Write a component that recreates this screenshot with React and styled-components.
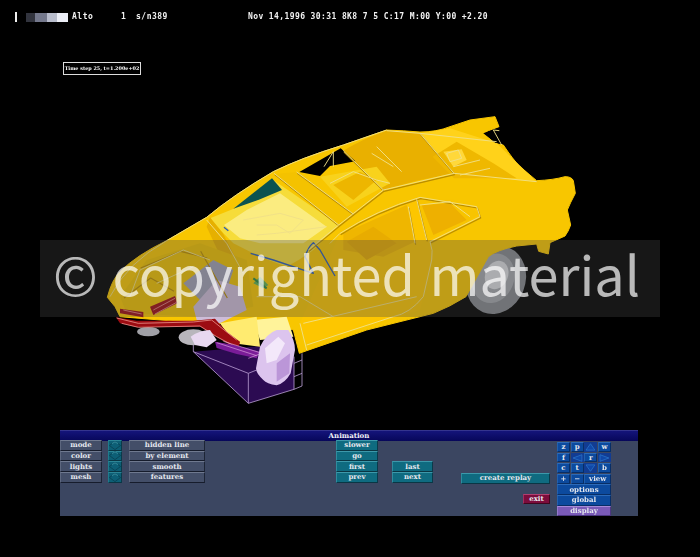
import React from "react";
import styled, { createGlobalStyle, css } from "styled-components";

const Global = createGlobalStyle`
  html, body { margin: 0; padding: 0; background: #000; }
  #root { width: 700px; height: 557px; overflow: hidden; }
`;

const Page = styled.div`
  position: relative;
  width: 700px;
  height: 557px;
  background: #000;
  display: flex;
  flex-direction: column;
  overflow: hidden;
`;

const StatusBar = styled.header`
  height: 12px;
  margin-top: 11px;
  padding-left: 15px;
  display: flex;
  align-items: center;
  color: #f2f2f2;
  font: bold 8px/10px "DejaVu Sans Mono", monospace;
  filter: blur(0.3px);
  white-space: pre;
`;
const Tick = styled.i`
  width: 1.5px;
  height: 10px;
  background: #eee;
  margin-right: 9.5px;
`;
const Ramp = styled.div`
  display: flex;
  height: 9px;
  margin-right: 4px;
`;
const RampStep = styled.span`
  width: ${p => p.$w}px;
  background: ${p => p.$c};
`;
const StatusText = styled.span`
  width: ${p => p.$w}px;
  letter-spacing: ${p => p.$ls || 0.5}px;
`;

const TimeLabel = styled.div`
  box-sizing: border-box;
  width: 78px;
  height: 13px;
  margin: 39px 0 0 63px;
  border: 1px solid #ddd;
  color: #fff;
  font: bold 4.9px/11px "DejaVu Serif", serif;
  text-align: center;
  white-space: nowrap;
  filter: blur(0.25px);
`;

const CarArt = styled.svg`
  display: block;
  width: 480px;
  height: 300px;
  margin: 35px 0 0 100px;
  flex: none;
  filter: blur(0.45px);
`;

const Watermark = styled.div`
  position: absolute;
  left: 40px;
  top: 240px;
  box-sizing: border-box;
  width: 620px;
  height: 77px;
  padding-left: 13px;
  background: rgba(73, 73, 73, 0.32);
  color: rgba(255, 255, 255, 0.7);
  font: 400 54px/66px "Noto Sans CJK JP", "Noto Sans", sans-serif;
  word-spacing: 2.5px;
  white-space: nowrap;
`;

const Panel = styled.section`
  box-sizing: border-box;
  width: 578px;
  height: 86px;
  margin: 20px 0 0 60px;
  background: #3b4661;
  display: flex;
  flex-direction: column;
  filter: blur(0.3px);
`;
const TitleBar = styled.div`
  height: 11px;
  flex: none;
  background: linear-gradient(#14147a, #07075a);
  border-top: 1px solid #34348e;
  box-sizing: border-box;
  color: #f0f0f6;
  font: bold 7px/10px "DejaVu Serif", serif;
  text-align: center;
`;
const PanelBody = styled.div`
  flex: 1;
  display: flex;
  align-items: flex-start;
  margin-top: -1px;
`;
const Col = styled.div`
  display: flex;
  flex-direction: column;
  flex: none;
  width: ${p => p.$w}px;
  margin-left: ${p => p.$ml || 0}px;
  padding-top: ${p => p.$pt || 0}px;
`;

const tones = {
  slate: css`background:#434e68;border-color:#6f798f #1d2536 #161c2c #5c667e;`,
  teal: css`background:#0f6b80;border-color:#3d98aa #0a3a4a #0a3644 #2f8c9e;`,
  deep: css`background:#0d5f76;border-color:#2c8596 #0a3a4a #0a3644 #1f7a8c;`,
  maroon: css`background:#7c0c3c;border-color:#b04070 #40061f #40061f #a03060;`,
  blue: css`background:#0c4a9e;border-color:#2c6ab8 #082e66 #082e66 #2260ae;`,
  purple: css`background:#7a5ab8;border-color:#a68ad8 #4c3680 #4c3680 #9478cc;`,
};

const Btn = styled.button`
  display: block;
  box-sizing: border-box;
  padding: 0;
  margin: 0;
  width: 100%;
  height: ${p => p.$h || 10.67}px;
  border: 1px solid;
  ${p => tones[p.$tone || "slate"]}
  color: #e4e7ee;
  font: bold 7px/8px "DejaVu Serif", serif;
  text-align: center;
  white-space: nowrap;
`;

const ArrowCell = styled(Btn)`
  display: flex;
  align-items: center;
  justify-content: center;
`;

const Tiles = styled.div`
  display: grid;
  grid-template-columns: repeat(4, minmax(0, 1fr));
  gap: 0.8px;
`;
const Tile = styled(Btn)`
  height: 9.8px;
  min-width: 0;
  font-size: 7px;
  display: flex;
  align-items: center;
  justify-content: center;
  grid-column: span ${p => p.$span || 1};
`;
const DarkTile = styled(Tile)`
  background: #123c92;
  border-color: #123c92;
`;

const ActionBlock = styled.div`
  display: flex;
  flex-direction: column;
  gap: 0;
  margin-top: 0.8px;
`;

const Stack = styled.div`
  display: flex;
  flex-direction: column;
  gap: ${p => p.$gap || 0}px;
`;

const ExitWrap = styled.div`
  width: 27px;
  margin-left: 62px;
`;

const Diamond = () => (
  <svg width="12" height="9" viewBox="0 0 12 9">
    <path d="M6 .4 11.6 4.5 6 8.6 .4 4.5Z" fill="none" stroke="#0a4658" strokeWidth="1" />
    <path d="M3 2.6 6 .8 9 2.6" fill="none" stroke="#4aa8b8" strokeWidth=".7" />
  </svg>
);

const Tri = ({ d }) => (
  <svg width="11" height="8" viewBox="0 0 12 9">
    <path d={d} fill="#1048a8" stroke="#2a72c8" strokeWidth=".9" />
  </svg>
);

const Y1 = "#f8c600";

const Car = () => (
  <CarArt viewBox="0 0 1440 900" aria-hidden="true">
    {/* support box behind */}
    <path d="M280 725 445 880 582 838 582 700Z" fill="#2c0b52" />
    <g fill="none" stroke="#b69ad0" strokeWidth="2.5">
      <path d="M280 705V725L445 880 582 838V740" />
      <path d="M445 880V790L280 725" />
      <path d="M582 838 606 828V730M606 750 582 760M606 790 582 800" />
      <path d="M445 790 470 780" />
    </g>
    {/* wheels */}
    <ellipse cx="1188" cy="510" rx="88" ry="104" transform="rotate(22 1188 510)" fill="#85888e" />
    <ellipse cx="1180" cy="505" rx="62" ry="76" transform="rotate(22 1180 505)" fill="#a4a7ad" />
    <ellipse cx="1190" cy="495" rx="34" ry="44" transform="rotate(22 1190 495)" fill="#dadce0" />
    <ellipse cx="145" cy="665" rx="34" ry="14" fill="#a0a0a6" />
    <ellipse cx="280" cy="682" rx="44" ry="24" fill="#b8b6bc" />
    {/* yellow shell */}
    <path
      fill={Y1}
      stroke={Y1}
      strokeWidth="3"
      strokeLinejoin="round"
      d="M22 562Q35 510 60 485Q110 435 200 392L320 322Q400 255 520 185Q600 145 730 105L860 60Q910 62 960 66Q1010 66 1050 50L1110 30 1185 20 1197 50 1165 62 1150 70 1185 100 1210 105Q1240 150 1260 170L1310 212Q1360 210 1395 200 1415 200 1420 212L1426 250Q1410 280 1402 300L1412 345Q1405 365 1395 378L1350 398 1345 432 1316 424 1310 402 1250 408Q1190 420 1165 440L1098 560Q1050 590 1000 610L800 660 620 722 598 730 580 660 520 640 300 640 60 620 45 590Z"
    />
    {/* bright bonnet / screen region */}
    <path fill="#f6dc3a" d="M330 325 405 295 520 210 716 345 640 420Q600 450 560 470L480 440 400 400 370 370Z" />
    <path fill="#fbec80" d="M372 345Q410 320 440 300L540 250 680 350 610 400 480 400 420 385Z" />
    <path fill="#0b5350" d="M400 296 516 205 546 240 480 268Z" />
    <path fill="#f4c200" d="M522 192 590 186 760 312 716 345Z" />
    <path fill="#e6b000" d="M330 322 370 372 420 470 380 480 320 350Z" />
    {/* roof */}
    <path fill="#e9b000" d="M730 122Q790 85 860 62L960 70 1062 190 950 212 850 240Z" />
    <path fill="#ffd21a" d="M960 70 1050 55 1190 100 1310 215 1062 190Z" />
    <path fill="#efb800" d="M998 140 1070 95 1180 160 1250 205 1062 205Z" />
    <path fill="#ffd83a" d="M1030 125 1085 118 1100 150 1060 170Z" />
    {/* upper side cabin */}
    <path fill="#f8d21c" d="M660 200 830 170 870 220 740 290Z" />
    <path fill="#edb600" d="M700 225 780 185 830 210 760 270Z" />
    {/* holes */}
    <path fill="#000" d="M598 186 722 115 766 154 690 168 660 198Z" />
    <path fill="#000" d="M1150 70 1180 60 1200 102 1185 96Z" />
    {/* side door */}
    <path fill="#fdc600" d="M720 370Q830 300 960 262L1130 290 1140 320 990 395 1000 440 960 600 620 700 600 640Z" />
    <path fill="#f8c400" d="M950 268 1060 268 1140 310 1090 345 980 390Z" />
    <path fill="#eeb000" d="M965 285 1050 280 1100 330 1000 375Z" />
    <path fill="#efb600" d="M730 370 920 285 945 395 850 440 730 420Z" />
    <path fill="#e8ac00" d="M740 395 820 350 890 400 800 450Z" />
    {/* front engine bay */}
    <path fill="#edc000" d="M60 560 140 450 300 400 440 450 460 590 300 620 80 610Z" />
    <path fill="#a0a0b4" d="M250 520 340 450 400 480 380 540 300 570Z" />
    <path fill="#cdbcd8" d="M280 590 350 510 420 530 440 600 360 640 290 630Z" />
    <path fill="#5fb050" d="M460 520 480 500 505 525 490 535Z" />
    <path fill="#fff39a" d="M460 630 560 620 580 680 480 690Z" />
    <path fill="#ffeb70" d="M360 640 470 620 480 710 400 700Z" />
    {/* red front rails */}
    <path fill="#9c0c12" d="M48 622 110 632 280 632 345 626 380 665 420 695 415 720 340 675 300 650 110 652 60 640Z" />
    <path fill="#9c0c12" d="M60 596 130 606 130 622 60 610ZM150 590 225 558 232 580 160 615Z" />
    <g fill="none" stroke="#f2a099" strokeWidth="2.2">
      <path d="M50 624 115 640 280 636 335 630 410 690" />
      <path d="M65 640 115 652 300 648 350 680 410 712" />
      <path d="M160 600 225 565M165 612 228 578M70 600 125 612" />
    </g>
    <path fill="#7a1c98" d="M345 695 400 704 480 725 470 745 410 732 350 714Z" />
    <g fill="none" stroke="#e8b4e8" strokeWidth="1.8"><path d="M350 698 470 737M370 694 480 728M445 745 490 728" /></g>
    {/* purple blobs */}
    <path fill="#dcc4ee" d="M480 710Q500 670 530 660L565 660Q585 690 585 720L572 790Q555 820 530 826 500 822 490 810 468 790 468 775Z" />
    <path fill="#f3e8fa" d="M495 715 535 680 555 700 530 750 500 760Z" />
    <path fill="#bb96d8" d="M530 760 570 730 568 790 530 815Z" />
    <path fill="#e8d8f0" d="M272 680Q300 660 330 660L350 690 320 712 285 705Z" />
    {/* blue service lines */}
    <g fill="none" stroke="#2a5cb8" strokeWidth="4" strokeLinejoin="round">
      <path d="M452 430 520 450 640 490 615 440Q625 410 640 398L660 420 705 498" />
      <path d="M372 352 385 362" />
    </g>
    <path d="M460 505 500 535" stroke="#2a8a40" strokeWidth="6" fill="none" />
    {/* dark emboss under ridges */}
    <g fill="none" stroke="#b88c00" strokeWidth="3.5" strokeLinejoin="round" transform="translate(2 4)">
      <path d="M522 190 716 345 625 420" />
      <path d="M590 186 760 312" />
      <path d="M716 345 850 240 1062 190" />
      <path d="M850 240 730 122" />
      <path d="M960 70 1062 190" />
      <path d="M720 370Q830 300 960 262L1130 290 1140 320 990 395" />
      <path d="M950 268 980 390M925 290 945 400" />
      <path d="M120 470 240 420 320 440M70 560 150 500 220 540M300 420 380 560" />
    </g>
    {/* pale detail lines */}
    <g fill="none" stroke="#f0e088" strokeWidth="2.8" strokeLinejoin="round">
      <path d="M30 560Q80 460 200 392L320 322Q400 255 520 185Q600 145 730 105L860 60" />
      <path d="M522 190 716 345 625 420" />
      <path d="M590 186 760 312" />
      <path d="M320 330 380 400 430 490" />
      <path d="M716 345 850 240 1062 190 1310 215" />
      <path d="M850 240 730 122" />
      <path d="M960 70 1062 190" />
      <path d="M860 62 960 70 1190 95" />
      <path d="M672 170 700 125 700 170" />
      <path d="M720 370Q830 300 960 262L1130 290 1140 320 990 395Q1000 420 995 450L970 560Q930 610 880 620L620 705" />
      <path d="M950 268 980 390M925 290 945 400M690 400 720 370" />
      <path d="M600 640 620 720" />
      <path d="M1198 62 1180 60 1205 105" />
      <path d="M830 110 905 185M815 130 880 170" />
      <path d="M1040 130 1075 120 1085 145 1050 155ZM1060 170 1140 150M1080 195 1170 175" />
      <path d="M690 220 760 185 830 210 870 220" />
      <path d="M430 330 540 310 610 330 570 370 530 345 470 345" />
      <path d="M470 375 530 370 680 350" />
      <path d="M960 285 1050 275 1110 320" />
      <path d="M90 560 120 480 250 420 330 450M170 520 280 470" />
      <path d="M470 560 600 560 700 620M610 640 950 560" />
    </g>
  </CarArt>
);

const Up = "M6 .8 11 8H1Z";
const Down = "M6 8.2 11 1H1Z";
const Left = "M1 4.5 11 .8V8.2Z";
const Right = "M11 4.5 1 .8V8.2Z";

export default function App() {
  return (
    <Page>
      <Global />
      <StatusBar>
        <Tick />
        <Ramp>
          <RampStep $w={9} $c="#32343e" />
          <RampStep $w={12} $c="#74788c" />
          <RampStep $w={10} $c="#b8bccc" />
          <RampStep $w={11} $c="#eceef6" />
        </Ramp>
        <StatusText $w={49}>Alto</StatusText>
        <StatusText $w={15}>1</StatusText>
        <StatusText $w={112}>s/n389</StatusText>
        <StatusText $ls={0.4}>Nov 14,1996 30:31 8K8 7 5 C:17 M:00 Y:00 +2.20</StatusText>
      </StatusBar>
      <TimeLabel>Time step 25, t=1.200e+02</TimeLabel>
      <Car />
      <Panel>
        <TitleBar>Animation</TitleBar>
        <PanelBody>
          <Col $w={42}>
            {["mode", "color", "lights", "mesh"].map(t => <Btn key={t}>{t}</Btn>)}
          </Col>
          <Col $w={14} $ml={6}>
            {[0, 1, 2, 3].map(i => <ArrowCell key={i} $tone="deep"><Diamond /></ArrowCell>)}
          </Col>
          <Col $w={76} $ml={7}>
            {["hidden line", "by element", "smooth", "features"].map(t => <Btn key={t}>{t}</Btn>)}
          </Col>
          <Col $w={42} $ml={131}>
            {["slower", "go", "first", "prev"].map(t => <Btn key={t} $tone="teal">{t}</Btn>)}
          </Col>
          <Col $w={41} $ml={14} $pt={21.3}>
            {["last", "next"].map(t => <Btn key={t} $tone="teal">{t}</Btn>)}
          </Col>
          <Col $w={89} $ml={28} $pt={33}>
            <Stack $gap={10}>
              <Btn $tone="teal">create replay</Btn>
              <ExitWrap><Btn $tone="maroon">exit</Btn></ExitWrap>
            </Stack>
          </Col>
          <Col $w={54} $ml={7} $pt={2}>
            <Tiles>
              <Tile $tone="blue">z</Tile>
              <Tile $tone="blue">p</Tile>
              <DarkTile><Tri d={Up} /></DarkTile>
              <Tile $tone="blue">w</Tile>
              <Tile $tone="blue">f</Tile>
              <DarkTile><Tri d={Left} /></DarkTile>
              <Tile $tone="blue">r</Tile>
              <DarkTile><Tri d={Right} /></DarkTile>
              <Tile $tone="blue">c</Tile>
              <Tile $tone="blue">t</Tile>
              <DarkTile><Tri d={Down} /></DarkTile>
              <Tile $tone="blue">b</Tile>
              <Tile $tone="blue">+</Tile>
              <Tile $tone="blue">−</Tile>
              <Tile $tone="blue" $span={2}>view</Tile>
            </Tiles>
            <ActionBlock>
              <Btn $tone="blue">options</Btn>
              <Btn $tone="blue">global</Btn>
              <Btn $tone="purple">display</Btn>
            </ActionBlock>
          </Col>
        </PanelBody>
      </Panel>
      <Watermark>© copyrighted material</Watermark>
    </Page>
  );
}
